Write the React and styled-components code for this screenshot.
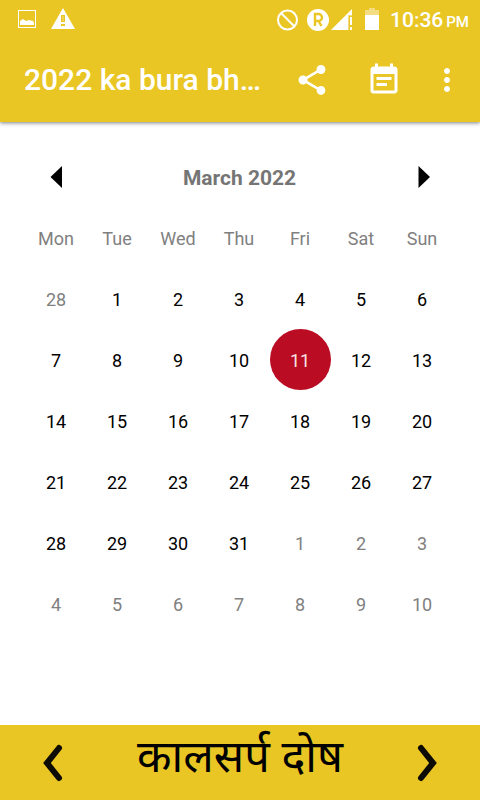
import React from "react";
import styled, { createGlobalStyle } from "styled-components";
import { MdEventNote, MdMoreVert, MdShare } from "react-icons/md";

const weekdays = ["Mon", "Tue", "Wed", "Thu", "Fri", "Sat", "Sun"];

const weeks = [
  [28, 1, 2, 3, 4, 5, 6],
  [7, 8, 9, 10, 11, 12, 13],
  [14, 15, 16, 17, 18, 19, 20],
  [21, 22, 23, 24, 25, 26, 27],
  [28, 29, 30, 31, 1, 2, 3],
  [4, 5, 6, 7, 8, 9, 10],
];

const isOutside = (week, day) =>
  (week === 0 && day > 7) || (week > 3 && day < 15);

const StatusBar = () => (
  <Status>
    <StatusGroup $gap="15px">
      <svg width="18" height="20" viewBox="0 0 18 20" aria-hidden="true">
        <rect x="0.5" y="1.5" width="17" height="17" fill="none" stroke="#fff" />
        <path d="M2 16v-4l3-2 3 2 3-1 4 1 1 2v2z" fill="#fff" />
      </svg>
      <svg width="24" height="22" viewBox="0 0 24 22" aria-hidden="true">
        <path
          d="M12 0 24 21H0zM10 7v7h4V7zm0 9v2h4v-2z"
          fill="#fff"
          fillRule="evenodd"
        />
        <path d="M11.500 8v5h1V8z" fill="#fff" opacity="0.4" />
      </svg>
    </StatusGroup>
    <StatusGroup>
      <svg width="102" height="24" viewBox="0 0 102 24" aria-hidden="true">
        <g fill="none" stroke="#fff" strokeWidth="2">
          <circle cx="10.500" cy="13" r="9.500" />
          <path d="M4 6l13 13" />
        </g>
        <circle cx="41" cy="13" r="11" fill="#fff" />
        <path
          d="M38 19V7h3.500a3.500 3.500 0 0 1 0 7H38m3.500 0 3 5"
          fill="none"
          stroke="#e9c624"
          strokeWidth="2.400"
        />
        <path d="M54 23 75 2v6h-4v15z" fill="#fff" />
        <path d="M71 8h4v15h-4z" fill="#f3dd80" />
        <path d="M72 9h3v14h-3z" fill="#e9c624" />
        <path d="M73 10h2v8h-2zM73 20h2v3h-2z" fill="#fff" />
        <path d="M88 8V3h4V1h6v2h4v5z" fill="#f3dd80" />
        <path d="M88 8h14v15H88z" fill="#fff" />
      </svg>
      <Clock>
        10:36<small>PM</small>
      </Clock>
    </StatusGroup>
  </Status>
);

const App = () => {
  const [selected, setSelected] = React.useState("1-11");

  return (
    <Page>
      <GlobalStyle />
      <Header>
        <StatusBar />
        <Toolbar>
          <Title>2022 ka bura bh…</Title>
          <Action aria-label="Share">
            <MdShare />
          </Action>
          <Action aria-label="Events">
            <MdEventNote />
          </Action>
          <Action $narrow aria-label="More options">
            <MdMoreVert />
          </Action>
        </Toolbar>
      </Header>

      <Calendar>
        <MonthBar>
          <MonthButton aria-label="Previous month">
            <svg width="25" height="24" viewBox="0 0 25 24">
              <path d="M18 1v22L6.500 12z" />
            </svg>
          </MonthButton>
          <Month>March 2022</Month>
          <MonthButton aria-label="Next month">
            <svg width="25" height="24" viewBox="0 0 25 24">
              <path d="M8.500 1v22L20 12z" />
            </svg>
          </MonthButton>
        </MonthBar>
        <Days>
          <thead>
            <tr>
              {weekdays.map((name) => (
                <Weekday key={name} scope="col">
                  {name}
                </Weekday>
              ))}
            </tr>
          </thead>
          <tbody>
            {weeks.map((days, week) => (
              <tr key={week}>
                {days.map((day) => {
                  const id = `${week}-${day}`;
                  return (
                    <td key={id}>
                      <Day
                        $outside={isOutside(week, day)}
                        $selected={id === selected}
                        aria-pressed={id === selected}
                        onClick={() => setSelected(id)}
                      >
                        {day}
                      </Day>
                    </td>
                  );
                })}
              </tr>
            ))}
          </tbody>
        </Days>
      </Calendar>

      <Footer>
        <FooterButton aria-label="Previous">
          <svg width="24" height="40" viewBox="0 0 24 40">
            <path d="M18 5 6 20l12 15" />
          </svg>
        </FooterButton>
        <Topic lang="hi">कालसर्प दोष</Topic>
        <FooterButton aria-label="Next">
          <svg width="24" height="40" viewBox="0 0 24 40">
            <path d="m6 5 12 15L6 35" />
          </svg>
        </FooterButton>
      </Footer>
    </Page>
  );
};

const GlobalStyle = createGlobalStyle`
  * {
    box-sizing: border-box;
  }

  body {
    margin: 0;
    background: #fff;
    font-family: Roboto, "Noto Sans", sans-serif;
  }

  button {
    display: flex;
    justify-content: center;
    align-items: center;
    padding: 0;
    border: 0;
    background: none;
    color: inherit;
    font: inherit;
    cursor: pointer;
  }
`;

const Page = styled.div`
  display: flex;
  flex-direction: column;
  min-height: 100vh;
`;

const Header = styled.header`
  background: #e9c624;
  color: #fff;
  box-shadow: 0 1px 4px rgba(0, 0, 0, 0.5);
`;

const Status = styled.div`
  display: flex;
  justify-content: space-between;
  align-items: center;
  height: 38px;
  padding: 0 11px 0 18px;
`;

const StatusGroup = styled.div`
  display: flex;
  align-items: center;
  gap: ${(props) => props.$gap || "11px"};
`;

const Clock = styled.span`
  padding-top: 3px;
  font-size: 21px;
  font-weight: 500;
  line-height: 24px;
  white-space: nowrap;

  small {
    margin-left: 3px;
    font-size: 15px;
  }
`;

const Toolbar = styled.div`
  display: flex;
  align-items: center;
  height: 84px;
  padding: 0 6px 0 24px;
`;

const Title = styled.h1`
  flex: 1;
  min-width: 0;
  margin: 0;
  overflow: hidden;
  font-size: 30px;
  font-weight: 500;
  line-height: 36px;
  white-space: nowrap;
`;

const Action = styled.button`
  flex: none;
  width: ${(props) => (props.$narrow ? "54px" : "72px")};
  height: 72px;

  svg {
    width: 36px;
    height: 36px;
  }
`;

const Calendar = styled.main`
  flex: 1;
  padding: 24px 27px 24px 26px;
`;

const MonthBar = styled.div`
  display: flex;
  justify-content: space-between;
  align-items: center;
  height: 61px;
`;

const MonthButton = styled.button`
  width: 61px;
  height: 61px;
`;

const Month = styled.h2`
  margin: 0;
  padding-top: 2px;
  color: #757575;
  font-size: 21px;
  font-weight: 700;
  line-height: 24px;
`;

const Days = styled.table`
  width: 100%;
  table-layout: fixed;
  border-collapse: collapse;

  td {
    padding: 0;
  }
`;

const Weekday = styled.th`
  height: 61px;
  padding: 2px 1px 0 0;
  color: #808080;
  font-size: 18px;
  font-weight: 400;
`;

const Day = styled.button`
  width: 61px;
  height: 61px;
  margin: 0 auto;
  border-radius: 50%;
  font-size: 18px;

  && {
    padding: 2px 1px 0 0;
    background: ${(props) => (props.$selected ? "#ba0c23" : "none")};
    color: ${(props) =>
      props.$selected ? "#f8e2e5" : props.$outside ? "#808080" : "#000"};
  }
`;

const Footer = styled.footer`
  display: flex;
  justify-content: space-between;
  align-items: center;
  height: 75px;
  padding: 0 13px;
  background: #e9c624;
`;

const FooterButton = styled.button`
  width: 80px;
  height: 75px;

  path {
    fill: none;
    stroke: #0c0b04;
    stroke-width: 6;
    stroke-linecap: round;
  }
`;

const Topic = styled.p`
  margin: 0;
  padding-bottom: 16px;
  font-family: "Noto Sans", "Noto Sans Devanagari", sans-serif;
  font-size: 45px;
  line-height: 60px;
  white-space: nowrap;
`;

export default App;
